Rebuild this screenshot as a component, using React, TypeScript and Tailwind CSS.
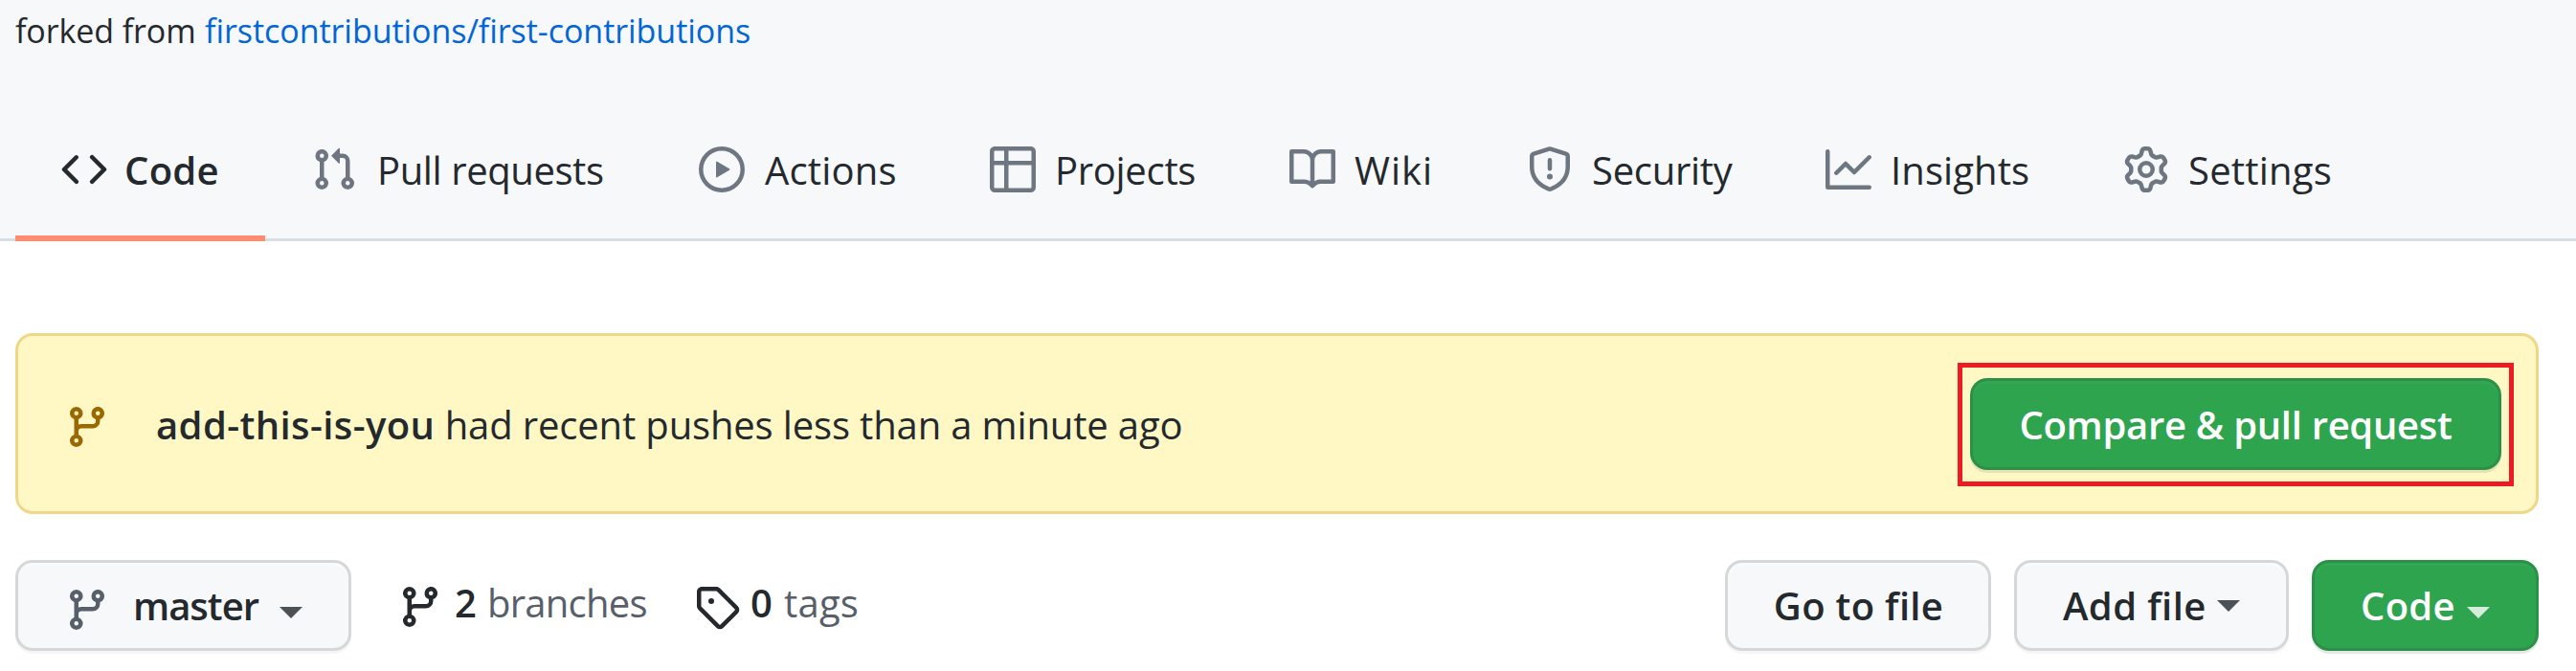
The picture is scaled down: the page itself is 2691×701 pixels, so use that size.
import type { ReactNode } from "react";

const PATHS = {
  code: "M4.72 3.22a.75.75 0 011.06 1.06L2.06 8l3.72 3.72a.75.75 0 11-1.06 1.06L.47 8.53a.75.75 0 010-1.06l4.25-4.25zm6.56 0a.75.75 0 10-1.06 1.06L13.94 8l-3.72 3.72a.75.75 0 101.06 1.06l4.25-4.25a.75.75 0 000-1.06l-4.25-4.25z",
  pull: "M7.177 3.073L9.573.677A.25.25 0 0110 .854v4.792a.25.25 0 01-.427.177L7.177 3.427a.25.25 0 010-.354zM3.75 2.5a.75.75 0 100 1.5.75.75 0 000-1.5zm-2.25.75a2.25 2.25 0 113 2.122v5.256a2.251 2.251 0 11-1.5 0V5.372A2.25 2.25 0 011.5 3.25zM11 2.5h-1V4h1a1 1 0 011 1v5.628a2.251 2.251 0 101.5 0V5A2.5 2.5 0 0011 2.5zm1 10.25a.75.75 0 111.5 0 .75.75 0 01-1.5 0zM3.75 12a.75.75 0 100 1.5.75.75 0 000-1.5z",
  play: "M1.5 8a6.5 6.5 0 1113 0 6.5 6.5 0 01-13 0zM8 0a8 8 0 100 16A8 8 0 008 0zM6.379 5.227A.25.25 0 006 5.442v5.117a.25.25 0 00.379.214l4.264-2.559a.25.25 0 000-.428L6.379 5.227z",
  table: "M0 1.75C0 .784.784 0 1.75 0h12.5C15.216 0 16 .784 16 1.75v3.585a.746.746 0 010 .83v8.085A1.75 1.75 0 0114.25 16H6.309a.748.748 0 01-1.118 0H1.75A1.75 1.75 0 010 14.25V6.165a.746.746 0 010-.83V1.75zM1.5 6.5v7.75c0 .138.112.25.25.25H5v-8H1.5zM5 5H1.5V1.75a.25.25 0 01.25-.25H5V5zm1.5 1.5v8h7.75a.25.25 0 00.25-.25V6.5h-8zm8-1.5h-8V1.5h7.75a.25.25 0 01.25.25V5z",
  book: "M0 1.75A.75.75 0 01.75 1h4.253c1.227 0 2.317.59 3 1.501A3.744 3.744 0 0111.006 1h4.245a.75.75 0 01.75.75v10.5a.75.75 0 01-.75.75h-4.507a2.25 2.25 0 00-1.591.659l-.622.621a.75.75 0 01-1.06 0l-.622-.621A2.25 2.25 0 005.258 13H.75a.75.75 0 01-.75-.75V1.75zm8.755 3a2.25 2.25 0 012.25-2.25H14.5v9h-3.757c-.71 0-1.4.201-1.992.572l.004-7.322zm-1.504 7.324l.004-5.073-.002-2.253A2.25 2.25 0 005.003 2.5H1.5v9h3.757a3.75 3.75 0 011.994.574z",
  shield: "M7.467.133a1.75 1.75 0 011.066 0l5.25 1.68A1.75 1.75 0 0115 3.48V7c0 1.566-.32 3.182-1.303 4.682-.983 1.498-2.585 2.813-5.032 3.855a1.7 1.7 0 01-1.33 0c-2.447-1.042-4.049-2.357-5.032-3.855C1.32 10.182 1 8.566 1 7V3.48a1.75 1.75 0 011.217-1.667l5.25-1.68zm.61 1.429a.25.25 0 00-.153 0l-5.25 1.68a.25.25 0 00-.174.238V7c0 1.358.275 2.666 1.057 3.86.784 1.194 2.121 2.34 4.366 3.297a.2.2 0 00.154 0c2.245-.956 3.582-2.104 4.366-3.298C13.225 9.666 13.5 8.36 13.5 7V3.48a.25.25 0 00-.174-.237l-5.25-1.68zM9 10.5a1 1 0 11-2 0 1 1 0 012 0zm-.25-5.75a.75.75 0 10-1.5 0v3a.75.75 0 001.5 0v-3z",
  graph: "M1.5 1.75a.75.75 0 00-1.5 0v12.5c0 .414.336.75.75.75h14.5a.75.75 0 000-1.5H1.5V1.75zm14.28 2.53a.75.75 0 00-1.06-1.06L10 7.94 7.53 5.47a.75.75 0 00-1.06 0L3.22 8.72a.75.75 0 001.06 1.06L7 7.06l2.47 2.47a.75.75 0 001.06 0l5.25-5.25z",
  gear: "M7.429 1.525a6.593 6.593 0 011.142 0c.036.003.108.036.137.146l.289 1.105c.147.56.55.967.997 1.189.174.086.341.183.501.29.417.278.97.423 1.53.27l1.102-.303c.11-.03.175.016.195.046.219.31.41.641.573.989.014.031.022.11-.059.19l-.815.806c-.411.406-.562.957-.53 1.456a4.588 4.588 0 010 .582c-.032.499.119 1.05.53 1.456l.815.806c.08.08.073.159.059.19a6.494 6.494 0 01-.573.99c-.02.029-.086.074-.195.045l-1.103-.303c-.559-.153-1.112-.008-1.529.27-.16.107-.327.204-.5.29-.449.222-.851.628-.998 1.189l-.289 1.105c-.029.11-.101.143-.137.146a6.613 6.613 0 01-1.142 0c-.036-.003-.108-.037-.137-.146l-.289-1.105c-.147-.56-.55-.967-.997-1.189a4.502 4.502 0 01-.501-.29c-.417-.278-.97-.423-1.53-.27l-1.102.303c-.11.03-.175-.016-.195-.046a6.492 6.492 0 01-.573-.989c-.014-.031-.022-.11.059-.19l.815-.806c.411-.406.562-.957.53-1.456a4.587 4.587 0 010-.582c.032-.499-.119-1.05-.53-1.456l-.815-.806c-.08-.08-.073-.159-.059-.19a6.44 6.44 0 01.573-.99c.02-.029.086-.075.195-.045l1.103.303c.559.153 1.112.008 1.529-.27.16-.107.327-.204.5-.29.449-.222.851-.628.998-1.189l.289-1.105c.029-.11.101-.143.137-.146zM8 0c-.236 0-.47.01-.701.03-.743.065-1.29.615-1.458 1.261l-.29 1.106c-.017.066-.078.158-.211.224a5.994 5.994 0 00-.668.386c-.123.082-.233.09-.3.071L3.27 2.776c-.644-.177-1.392.02-1.82.63a7.977 7.977 0 00-.704 1.217c-.315.675-.111 1.422.363 1.891l.815.806c.05.048.098.147.088.294a6.084 6.084 0 000 .772c.01.147-.038.246-.088.294l-.815.806c-.474.469-.678 1.216-.363 1.891.2.428.436.835.704 1.218.428.609 1.176.806 1.82.63l1.103-.303c.066-.019.176-.011.299.071.213.143.436.272.668.386.133.066.194.158.212.224l.289 1.106c.169.646.715 1.196 1.458 1.26a8.094 8.094 0 001.402 0c.743-.064 1.29-.614 1.458-1.26l.29-1.106c.017-.066.078-.158.211-.224a5.98 5.98 0 00.668-.386c.123-.082.233-.09.3-.071l1.102.302c.644.177 1.392-.02 1.82-.63.268-.382.505-.789.704-1.217.315-.675.111-1.422-.364-1.891l-.814-.806c-.05-.048-.098-.147-.088-.294a6.1 6.1 0 000-.772c-.01-.147.039-.246.088-.294l.814-.806c.475-.469.679-1.216.364-1.891a7.992 7.992 0 00-.704-1.218c-.428-.609-1.176-.806-1.82-.63l-1.103.303c-.066.019-.176.011-.299-.071a5.991 5.991 0 00-.668-.386c-.133-.066-.194-.158-.212-.224L10.16 1.29C9.99.645 9.444.095 8.701.031A8.094 8.094 0 008 0zm1.5 8a1.5 1.5 0 11-3 0 1.5 1.5 0 013 0zM11 8a3 3 0 11-6 0 3 3 0 016 0z",
  branch: "M11.75 2.5a.75.75 0 100 1.5.75.75 0 000-1.5zm-2.25.75a2.25 2.25 0 113 2.122V6A2.5 2.5 0 0110 8.5H6a1 1 0 00-1 1v1.128a2.251 2.251 0 11-1.5 0V5.372a2.25 2.25 0 111.5 0v1.836A2.492 2.492 0 016 7h4a1 1 0 001-1v-.628A2.25 2.25 0 019.5 3.25zM4.25 12a.75.75 0 100 1.5.75.75 0 000-1.5zM3.5 3.25a.75.75 0 111.5 0 .75.75 0 01-1.5 0z",
  tag: "M2.5 7.775V2.75a.25.25 0 01.25-.25h5.025a.25.25 0 01.177.073l6.25 6.25a.25.25 0 010 .354l-5.025 5.025a.25.25 0 01-.354 0l-6.25-6.25a.25.25 0 01-.073-.177zm-1.5 0V2.75C1 1.784 1.784 1 2.75 1h5.025c.464 0 .91.184 1.238.513l6.25 6.25a1.75 1.75 0 010 2.474l-5.026 5.026a1.75 1.75 0 01-2.474 0l-6.25-6.25A1.75 1.75 0 011 7.775zM6 5a1 1 0 100 2 1 1 0 000-2z",
};

function Icon({ name, className = "" }: { name: keyof typeof PATHS; className?: string }) {
  return (
    <svg viewBox="0 0 16 16" fill="currentColor" className={`size-12 shrink-0 ${className}`}>
      <path fillRule="evenodd" d={PATHS[name]} />
    </svg>
  );
}

function Caret({ className = "" }: { className?: string }) {
  return (
    <svg viewBox="0 0 24 12" fill="currentColor" className={`h-3 w-6 shrink-0 ${className}`}>
      <path d="M0 0H24L12 12Z" />
    </svg>
  );
}

const TABS: { label: string; icon: keyof typeof PATHS; box: string; text: string }[] = [
  { label: "Code", icon: "code", box: "w-[261px] border-[#fd8c73]", text: "ml-[18px] font-semibold tracking-[0.3px]" },
  { label: "Pull requests", icon: "pull", box: "w-[405px] border-transparent", text: "ml-[21px] tracking-[-0.4px]" },
  { label: "Actions", icon: "play", box: "w-[304px] border-transparent", text: "ml-[21px] tracking-[0.2px]" },
  { label: "Projects", icon: "table", box: "w-[313px] border-transparent", text: "ml-5 tracking-[-0.3px]" },
  { label: "Wiki", icon: "book", box: "w-[248px] border-transparent", text: "ml-5 tracking-[1px]" },
  { label: "Security", icon: "shield", box: "w-[312px] border-transparent", text: "ml-5 tracking-[-0.3px]" },
  { label: "Insights", icon: "graph", box: "w-[311px] border-transparent", text: "ml-5 tracking-[0.1px]" },
  { label: "Settings", icon: "gear", box: "w-[320px] border-transparent", text: "ml-5 tracking-[0.2px]" },
];

function Button({ green, className, children }: { green?: boolean; className: string; children: ReactNode }) {
  const tone = green
    ? "bg-[#2ea44f] text-white shadow-[0_3px_0_rgba(27,31,35,0.1),inset_0_3px_0_rgba(255,255,255,0.03)]"
    : "bg-[#f6f8fa] text-[#24292e] shadow-[0_3px_0_rgba(27,31,35,0.04),inset_0_3px_0_rgba(255,255,255,0.25)]";
  return (
    <button
      className={`flex shrink-0 items-center rounded-[18px] border-[3px] border-[rgba(27,31,35,0.15)] font-semibold ${tone} ${className}`}
    >
      {children}
    </button>
  );
}

export default function App() {
  return (
    <div className="h-[701px] w-[2691px] overflow-hidden bg-white font-['Open_Sans',sans-serif] text-[40px] leading-[48px] whitespace-nowrap text-[#24292e]">
      <header className="flex h-[252px] flex-col justify-between border-b-[3px] border-[#d8dee4] bg-[#f6f8fa] pt-2 pl-4">
        <p className="flex text-[34px]">
          <span className="w-[198px] tracking-[-0.1px]">forked from</span>
          <a className="tracking-[-0.05px] text-[#0366d6]">firstcontributions/first-contributions</a>
        </p>
        <nav className="-mb-[3px] flex">
          {TABS.map((t) => (
            <a key={t.label} className={`flex h-[147px] items-center border-b-[6px] pt-[3px] pl-12 ${t.box}`}>
              <Icon name={t.icon} className={t.icon === "code" ? "" : "text-[#6e7781]"} />
              <span className={`pt-[2px] ${t.text}`}>{t.label}</span>
            </a>
          ))}
        </nav>
      </header>

      <main className="pr-[39px] pl-4">
        <section className="mt-24 flex h-[189px] items-center rounded-[18px] border-[3px] border-[#eed888] bg-[#fff8c5] pt-[2px] pr-[23px] pl-12">
          <Icon name="branch" className="mt-[5px] text-[#9a6700]" />
          <p className="ml-12 grow">
            <strong className="font-semibold tracking-[0.4px]">add-this-is-you</strong>{" "}
            <span className="tracking-[-0.15px]">had recent pushes less than a minute ago</span>
          </p>
          <div className="border-[5px] border-[#ed1c24] px-2 pt-[11px] pb-3">
            <Button green className="h-24 w-[555px] justify-center pt-px tracking-[-0.3px]">
              Compare &amp; pull request
            </Button>
          </div>
        </section>

        <section className="mt-12 flex h-[95px] items-center">
          <Button className="h-[95px] w-[351px] pl-12">
            <Icon name="branch" className="mt-2 text-[#57606a]" />
            <span className="ml-6 w-[129px] tracking-[-1px]">master</span>
            <Caret className="mt-[14px] ml-6 text-[#4c5156]" />
          </Button>
          <a className="ml-12 flex items-center">
            <Icon name="branch" className="mt-[2px]" />
            <span className="mb-[6px] ml-[12px] w-[34px] font-semibold">2</span>
            <span className="mb-[6px] w-[216px] tracking-[-0.75px] text-[#57606a]">branches</span>
          </a>
          <a className="flex grow items-center">
            <Icon name="tag" className="mt-[2px]" />
            <span className="mb-[6px] ml-[11px] w-[35px] font-semibold">0</span>
            <span className="mb-[6px] tracking-[0.2px] text-[#57606a]">tags</span>
          </a>
          <div className="flex gap-6">
            <Button className="h-[95px] w-[278px] justify-center pt-px pl-px tracking-[0.3px]">Go to file</Button>
            <Button className="h-[95px] w-[287px] pt-px pl-12">
              <span className="tracking-[0.4px]">Add file</span>
              <Caret className="ml-[11px] text-[#4c5156]" />
            </Button>
            <Button green className="h-[95px] w-[237px] pt-px pl-12">
              <span className="tracking-[0.3px]">Code</span>
              <Caret className="mt-[13px] ml-[12px] text-[#d5edda]" />
            </Button>
          </div>
        </section>
      </main>
    </div>
  );
}
